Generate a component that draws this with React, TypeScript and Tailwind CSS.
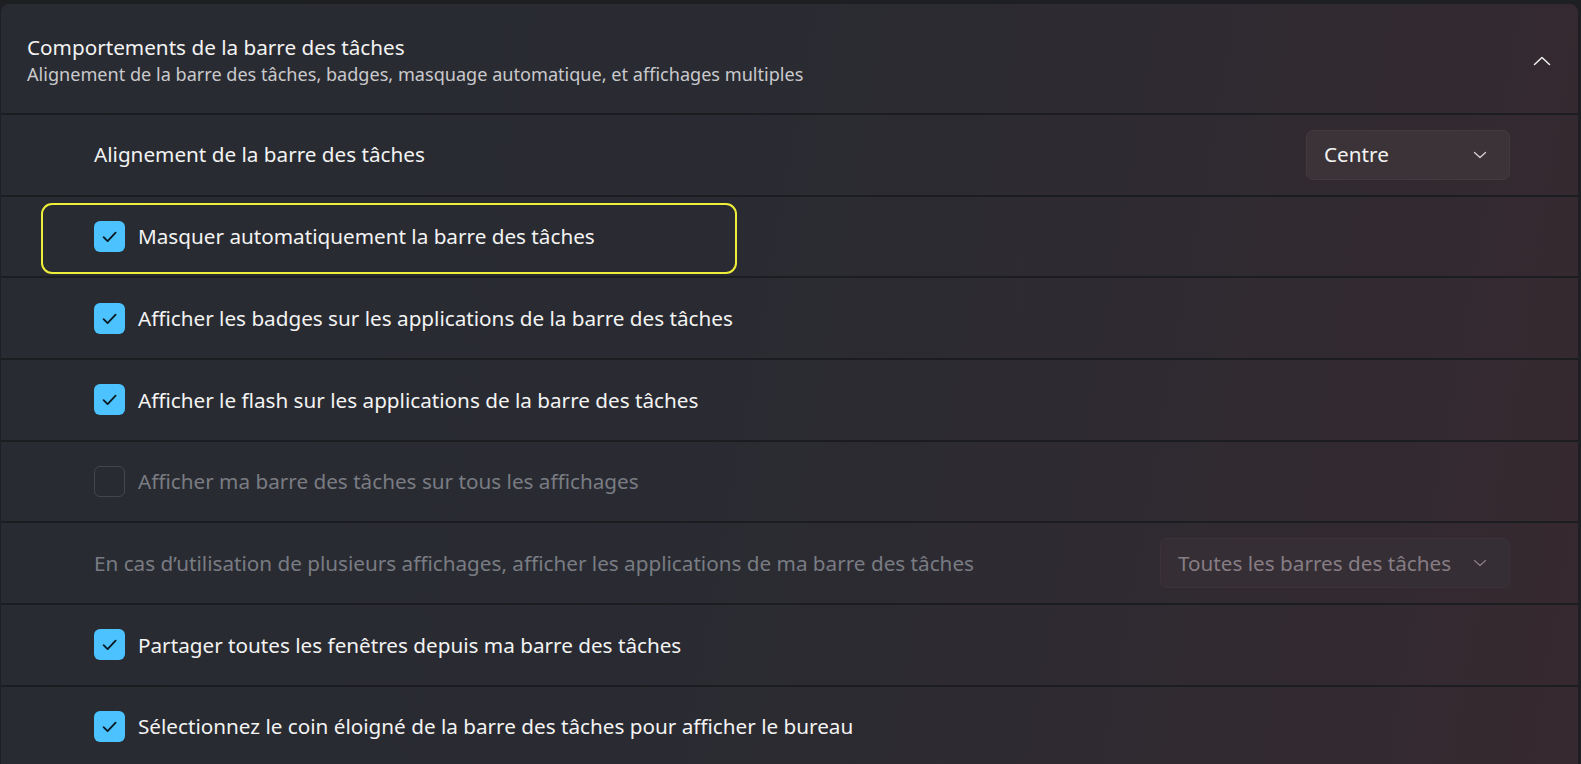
import React from "react";

const font = { fontFamily: '"Segoe UI", "Noto Sans", "Open Sans", sans-serif' };

function Check() {
  return (
    <div className="w-[31px] h-[31px] rounded-[6px] bg-[#4cc2ff] shrink-0">
      <svg width="31" height="31" viewBox="0 0 31 31" fill="none">
        <path d="M9.6 16.2 L13.6 20.1 L21.6 11.6" stroke="#0b1a22" strokeWidth="1.8" strokeLinecap="round" strokeLinejoin="round" />
      </svg>
    </div>
  );
}

function Unchecked() {
  return <div className="w-[31px] h-[31px] rounded-[6px] border-[1.5px] border-[#43464c] shrink-0" />;
}

function ChevronDown({ color }: { color: string }) {
  return (
    <svg width="14" height="8" viewBox="0 0 14 8" fill="none">
      <path d="M1.5 1.5 L7 6.5 L12.5 1.5" stroke={color} strokeWidth="1.3" strokeLinecap="round" strokeLinejoin="round" />
    </svg>
  );
}

function Sep() {
  return <div className="h-[2px] bg-[#1c1d21] shrink-0" />;
}

function CheckRow({ label, checked = true, disabled = false, focus = false }: { label: string; checked?: boolean; disabled?: boolean; focus?: boolean }) {
  return (
    <div className="relative h-[79.7px] flex items-center pl-[93px] pr-[68px] shrink-0">
      {focus && (
        <div className="absolute left-[40px] top-[6px] w-[696px] h-[71px] rounded-[11px] border-2 border-[#eeee3a]" />
      )}
      {checked ? <Check /> : <Unchecked />}
      <span className={`ml-[13px] text-[20.7px] leading-none ${disabled ? "text-[#797c83]" : "text-[#f3f3f3]"}`}>{label}</span>
    </div>
  );
}

export default function App() {
  return (
    <div className="w-[1581px] h-[764px] bg-[#1d1f23] overflow-hidden pt-[4px] pl-[1px] pr-[3px]" style={font}>
      <div className="h-full rounded-t-[8px] overflow-hidden flex flex-col bg-[linear-gradient(100deg,#282b31_0%,#2a2b32_45%,#302a31_75%,#36292f_100%)]">
        <div className="h-[109px] shrink-0 flex items-center justify-between pl-[26px] pr-[27px]">
          <div className="flex flex-col pt-[2px]">
            <span className="text-[20.7px] leading-[28px] text-[#f3f3f3]">Comportements de la barre des tâches</span>
            <span className="text-[18.1px] leading-[24px] text-[#c9c9cc] mt-[1px]">Alignement de la barre des tâches, badges, masquage automatique, et affichages multiples</span>
          </div>
          <svg width="18" height="10" viewBox="0 0 18 10" fill="none" className="mt-[5px]">
            <path d="M1.5 8.5 L9 1.5 L16.5 8.5" stroke="#f0f0f0" strokeWidth="1.5" strokeLinecap="round" strokeLinejoin="round" />
          </svg>
        </div>
        <Sep />
        <div className="h-[79.7px] flex items-center justify-between pl-[93px] pr-[68px] shrink-0">
          <span className="text-[20.7px] leading-none text-[#f3f3f3]">Alignement de la barre des tâches</span>
          <div className="w-[204px] h-[50px] rounded-[7px] bg-[#3c3338] border border-[#433a3f] flex items-center justify-between pl-[17px] pr-[22px]">
            <span className="text-[20.7px] leading-none text-[#f3f3f3]">Centre</span>
            <ChevronDown color="#d6d2d4" />
          </div>
        </div>
        <Sep />
        <CheckRow label="Masquer automatiquement la barre des tâches" focus />
        <Sep />
        <CheckRow label="Afficher les badges sur les applications de la barre des tâches" />
        <Sep />
        <CheckRow label="Afficher le flash sur les applications de la barre des tâches" />
        <Sep />
        <CheckRow label="Afficher ma barre des tâches sur tous les affichages" checked={false} disabled />
        <Sep />
        <div className="h-[79.7px] flex items-center justify-between pl-[93px] pr-[68px] shrink-0">
          <span className="text-[20.7px] leading-none text-[#797c83]">En cas d’utilisation de plusieurs affichages, afficher les applications de ma barre des tâches</span>
          <div className="w-[350px] h-[50px] rounded-[7px] bg-[#352e34] border border-[#3b3339] flex items-center justify-between pl-[17px] pr-[22px]">
            <span className="text-[20.7px] leading-none text-[#867d84]">Toutes les barres des tâches</span>
            <ChevronDown color="#867d84" />
          </div>
        </div>
        <Sep />
        <CheckRow label="Partager toutes les fenêtres depuis ma barre des tâches" />
        <Sep />
        <CheckRow label="Sélectionnez le coin éloigné de la barre des tâches pour afficher le bureau" />
      </div>
    </div>
  );
}
